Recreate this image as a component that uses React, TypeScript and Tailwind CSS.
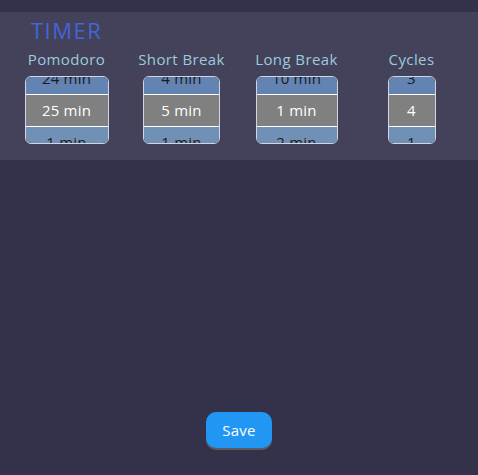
import React from "react";

type Col = { label: string; items: [string, string, string]; w: string };

const cols: Col[] = [
  { label: "Pomodoro", items: ["24 min", "25 min", "1 min"], w: "w-[84px]" },
  { label: "Short Break", items: ["4 min", "5 min", "1 min"], w: "w-[77px]" },
  { label: "Long Break", items: ["10 min", "1 min", "2 min"], w: "w-[82px]" },
  { label: "Cycles", items: ["3", "4", "1"], w: "w-[48px]" },
];

function Picker({ items, w }: { items: [string, string, string]; w: string }) {
  return (
    <div className={`${w} h-[68px] rounded-[6px] border border-[#d4d4e0] overflow-hidden`}>
      <div className="-mt-[14px] flex flex-col">
        <div className="h-[31px] bg-[#6383b3] flex items-center justify-center text-[#1a1a22]">{items[0]}</div>
        <div className="h-px bg-white" />
        <div className="h-[31px] bg-[#808080] flex items-center justify-center text-white">{items[1]}</div>
        <div className="h-px bg-white" />
        <div className="h-[31px] bg-[#7190b5] flex items-center justify-center text-[#1a1a22]">{items[2]}</div>
      </div>
    </div>
  );
}

export default function App() {
  return (
    <div
      className="w-[478px] h-[475px] bg-[#34324a] flex flex-col"
      style={{ fontFamily: "'Open Sans', 'Noto Sans', sans-serif" }}
    >
      <div className="h-[12px]" />
      <div className="h-[148px] bg-[#43425a] flex flex-col">
        <div className="pl-[31px] pt-[4px] h-[34px] text-[22px] leading-[28px] text-[#4465d8] tracking-[1.5px]">TIMER</div>
        <div className="grid grid-cols-4 px-[9px]">
          {cols.map((c) => (
            <div key={c.label} className="flex flex-col items-center">
              <div className="text-[15px] leading-[26px] text-[#9ccbdc] tracking-[0.4px]">{c.label}</div>
              <div className="mt-[4px] text-[15px] tracking-[0.2px]">
                <Picker items={c.items} w={c.w} />
              </div>
            </div>
          ))}
        </div>
      </div>
      <div className="flex-1" />
      <div className="flex justify-center pb-[27px]">
        <button className="w-[66px] h-[36px] rounded-[10px] bg-[#2196f3] text-white text-[15px] tracking-[0.3px] shadow-[0_2px_0_#5a5a66]">
          Save
        </button>
      </div>
    </div>
  );
}
